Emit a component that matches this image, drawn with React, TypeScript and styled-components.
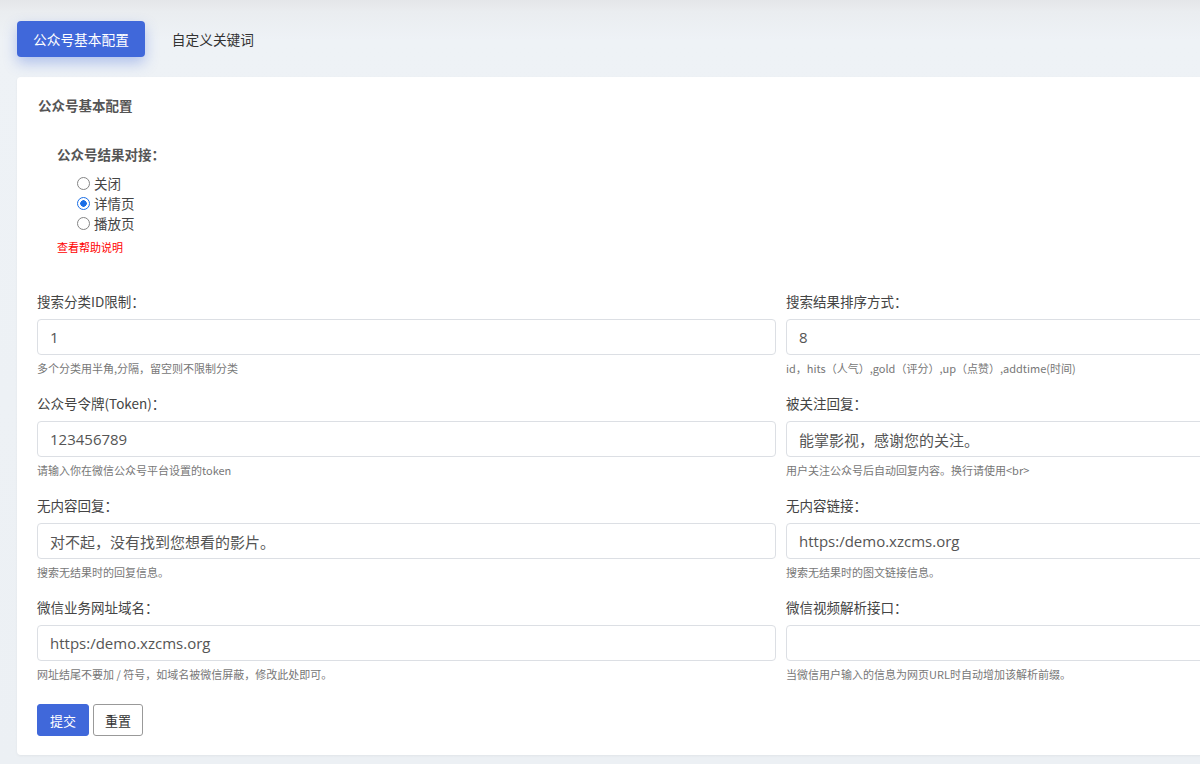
import { createGlobalStyle, styled } from "styled-components";

const GlobalStyle = createGlobalStyle`
    html, body {
        margin: 0;
        padding: 0;
        overflow: hidden;
        background: #eceff3;
        font-family: "Noto Sans CJK SC", "Noto Sans", sans-serif;
        color: #333;
    }
`

const Page = styled.div`
    width: 1200px;
    height: 764px;
    overflow: hidden;
    padding: 21px 0 0 17px;
    box-sizing: border-box;
    background: linear-gradient(to bottom, #e4e6e9 0px, #eaedf0 12px, #eef2f6 40px, #ecf0f4 100%);
`

const Tabs = styled.div`
    display: flex;
    align-items: center;
    gap: 11px;
    height: 36px;
`

const Tab = styled.div<{ $active?: boolean }>`
    height: 36px;
    padding: 0 16px;
    display: flex;
    align-items: center;
    font-size: 13.7px;
    border-radius: 4px;
    color: ${p => p.$active ? "#fff" : "#333"};
    background: ${p => p.$active ? "#4068da" : "transparent"};
    box-shadow: ${p => p.$active ? "0 6px 14px rgba(64, 104, 218, 0.35)" : "none"};
`

const Card = styled.div`
    margin-top: 20px;
    width: 1528px;
    background: #fff;
    border-radius: 4px;
    padding: 20px 20px 19px 20px;
    box-sizing: border-box;
    box-shadow: 0 1px 3px rgba(0, 0, 0, 0.05);
`

const CardTitle = styled.div`
    font-size: 13.5px;
    line-height: 16px;
    font-weight: bold;
    color: #555;
    margin-left: 1px;
`

const RadioBlock = styled.div`
    margin: 32px 0 0 20px;
`

const BlockLabel = styled.div`
    font-size: 13.5px;
    line-height: 18px;
    font-weight: bold;
    color: #555;
`

const RadioList = styled.div`
    margin: 10px 0 0 19px;
`

const RadioRow = styled.label`
    display: flex;
    align-items: center;
    height: 20px;
    font-size: 13.5px;
    color: #444;
`

const Radio = styled.input`
    appearance: none;
    width: 13px;
    height: 13px;
    margin: 0 4px 0 1px;
    box-sizing: border-box;
    border: 1.6px solid #858585;
    border-radius: 50%;
    background: #fff;
    &:checked {
        border-color: #1a6ee6;
        background: radial-gradient(circle, #1a6ee6 0 3px, #fff 3.5px);
    }
`

const HelpLink = styled.a`
    display: block;
    margin-top: 6px;
    font-size: 11px;
    line-height: 16px;
    color: #f00;
    text-decoration: none;
`

const Grid = styled.div`
    display: grid;
    grid-template-columns: 1fr 1fr;
    column-gap: 10px;
    margin-top: 37px;
`

const Field = styled.div`
    margin-bottom: 18px;
`

const FieldLabel = styled.div`
    font-size: 13.5px;
    line-height: 18px;
    color: #444;
    margin-bottom: 9px;
`

const Input = styled.input`
    display: block;
    width: 100%;
    height: 36px;
    box-sizing: border-box;
    border: 1px solid #dcdfe4;
    border-radius: 4px;
    padding: 0 12px;
    font-family: "Open Sans", "Noto Sans CJK SC", sans-serif;
    font-size: 15px;
    color: #555;
    outline: none;
`

const Help = styled.div`
    margin-top: 5px;
    font-size: 11px;
    line-height: 16px;
    color: #777;
`

const Actions = styled.div`
    display: flex;
    gap: 4px;
    margin-top: 4px;
`

const Button = styled.button<{ $primary?: boolean }>`
    height: 32px;
    padding: 0 ${p => p.$primary ? "12px" : "11px"};
    font-family: "Noto Sans CJK SC", sans-serif;
    font-size: 13px;
    border-radius: 3px;
    border: 1px solid ${p => p.$primary ? "#4068da" : "#999"};
    background: ${p => p.$primary ? "#4068da" : "#fff"};
    color: ${p => p.$primary ? "#fff" : "#333"};
`

const fields = [
    { label: "搜索分类ID限制：", value: "1", help: "多个分类用半角,分隔，留空则不限制分类" },
    { label: "搜索结果排序方式：", value: "8", help: "id，hits（人气）,gold（评分）,up（点赞）,addtime(时间)" },
    { label: "公众号令牌(Token)：", value: "123456789", help: "请输入你在微信公众号平台设置的token" },
    { label: "被关注回复：", value: "能掌影视，感谢您的关注。", help: "用户关注公众号后自动回复内容。换行请使用<br>" },
    { label: "无内容回复：", value: "对不起，没有找到您想看的影片。", help: "搜索无结果时的回复信息。" },
    { label: "无内容链接：", value: "https:/demo.xzcms.org", help: "搜索无结果时的图文链接信息。" },
    { label: "微信业务网址域名：", value: "https:/demo.xzcms.org", help: "网址结尾不要加 / 符号，如域名被微信屏蔽，修改此处即可。" },
    { label: "微信视频解析接口：", value: "", help: "当微信用户输入的信息为网页URL时自动增加该解析前缀。" },
]

export default function App() {
    return (
        <Page>
            <GlobalStyle />
            <Tabs>
                <Tab $active>公众号基本配置</Tab>
                <Tab>自定义关键词</Tab>
            </Tabs>
            <Card>
                <CardTitle>公众号基本配置</CardTitle>
                <RadioBlock>
                    <BlockLabel>公众号结果对接：</BlockLabel>
                    <RadioList>
                        <RadioRow><Radio type="radio" name="mode" />关闭</RadioRow>
                        <RadioRow><Radio type="radio" name="mode" defaultChecked />详情页</RadioRow>
                        <RadioRow><Radio type="radio" name="mode" />播放页</RadioRow>
                    </RadioList>
                    <HelpLink href="#">查看帮助说明</HelpLink>
                </RadioBlock>
                <Grid>
                    {fields.map((f, i) => (
                        <Field key={i}>
                            <FieldLabel>{f.label}</FieldLabel>
                            <Input defaultValue={f.value} />
                            <Help>{f.help}</Help>
                        </Field>
                    ))}
                </Grid>
                <Actions>
                    <Button $primary>提交</Button>
                    <Button>重置</Button>
                </Actions>
            </Card>
        </Page>
    )
}
